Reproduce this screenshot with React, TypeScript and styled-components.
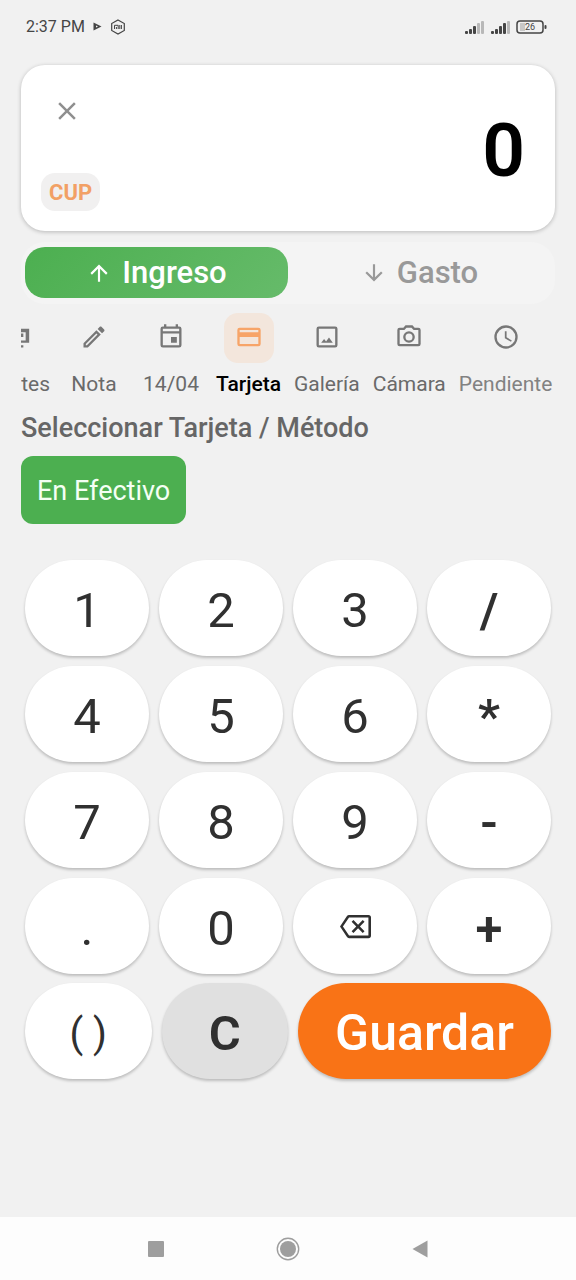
import React, { useState } from 'react';
import styled, { createGlobalStyle } from 'styled-components';

const GlobalStyle = createGlobalStyle`
  * { box-sizing: border-box; }
  body {
    margin: 0;
    background: #f1f1f1;
    font-family: Roboto, "Liberation Sans", sans-serif;
  }
  button {
    border: 0;
    padding: 0;
    background: none;
    font: inherit;
    color: inherit;
    cursor: pointer;
  }
  svg { display: block; flex: none; fill: currentColor; }
`;

const Screen = styled.div`
  display: flex;
  flex-direction: column;
  min-height: 100vh;
  background: #f1f1f1;
`;

const StatusBar = styled.header`
  display: flex;
  align-items: center;
  justify-content: space-between;
  height: 53px;
  padding: 0 29px 0 26px;
  color: #454545;
  font-size: 16px;
`;

const StatusGroup = styled.div<{ $gap: number }>`
  display: flex;
  align-items: center;
  gap: ${(p) => p.$gap}px;
`;

const Main = styled.main`
  display: flex;
  flex-direction: column;
  padding: 12px 21px 0;
`;

const AmountCard = styled.section`
  display: flex;
  align-items: center;
  justify-content: space-between;
  padding: 21px 30px 20px 20px;
  border-radius: 24px;
  background: #fff;
  box-shadow: 0 1px 4px rgba(0, 0, 0, 0.24);
`;

const CardSide = styled.div`
  display: flex;
  flex-direction: column;
  align-items: flex-start;
  gap: 37px;
`;

const CloseButton = styled.button`
  display: grid;
  place-items: center;
  width: 52px;
  height: 50px;
  color: #8f8f8f;
`;

const CurrencyButton = styled.button`
  height: 38px;
  padding: 0 8px;
  border-radius: 14px;
  background: #f1f0f0;
  color: #f2a065;
  font-size: 22px;
  font-weight: 700;
`;

const Amount = styled.output`
  padding-top: 2px;
  color: #000;
  font-size: 75px;
  font-weight: 600;
  line-height: 88px;
`;

const KindSwitch = styled.div`
  display: grid;
  grid-template-columns: 1fr 1fr;
  margin-top: 11px;
  padding: 5px 4px 6px;
  border-radius: 24px;
  background: #f4f4f4;
`;

const KindButton = styled.button<{ $active: boolean }>`
  display: flex;
  align-items: center;
  justify-content: center;
  gap: 10px;
  height: 51px;
  border-radius: 20px;
  background: ${(p) => (p.$active ? 'linear-gradient(135deg, #4caf50, #66bb6a)' : 'transparent')};
  color: ${(p) => (p.$active ? '#fff' : '#999')};
  font-size: 31px;
  font-weight: 500;
`;

const OptionStrip = styled.nav`
  display: flex;
  gap: 11px;
  margin-top: 9px;
  overflow: hidden;
`;

const OptionButton = styled.button<{ $active: boolean; $cut?: boolean; $dim?: boolean }>`
  display: flex;
  flex: none;
  flex-direction: column;
  align-items: ${(p) => (p.$cut ? 'flex-end' : 'center')};
  gap: 8px;
  min-width: ${(p) => (p.$cut ? 0 : 66)}px;
  padding: 0 ${(p) => (p.$cut ? 0 : 1)}px;
  color: ${(p) => (p.$active ? '#000' : p.$dim ? '#828282' : '#6a6a6a')};
  font-size: 21px;
  font-weight: ${(p) => (p.$active ? 500 : 400)};
  line-height: 26px;
`;

const OptionIcon = styled.span<{ $active: boolean; $cut?: boolean }>`
  display: grid;
  place-items: center;
  justify-content: ${(p) => (p.$cut ? 'start' : 'center')};
  width: ${(p) => (p.$cut ? 29 : 50)}px;
  height: 50px;
  padding-bottom: 2px;
  border-radius: 14px;
  background: ${(p) => (p.$active ? '#f3e6dc' : 'transparent')};
  color: ${(p) => (p.$active ? '#f7a468' : '#777')};
`;

const SectionTitle = styled.h2`
  margin: 15px 0 0;
  color: #666;
  font-size: 27px;
  font-weight: 500;
  line-height: 32px;
`;

const MethodList = styled.div`
  display: flex;
  gap: 10px;
  margin-top: 12px;
`;

const MethodButton = styled.button`
  height: 68px;
  padding: 1px 16px 0;
  border-radius: 12px;
  background: #4caf50;
  color: #f4fff4;
  font-size: 27px;
`;

const Keypad = styled.section`
  display: flex;
  flex-direction: column;
  gap: 9px;
  padding: 36px 4px 40px;
`;

const KeyGrid = styled.div<{ $columns: string }>`
  display: grid;
  grid-template-columns: ${(p) => p.$columns};
  gap: 10px;
`;

type Tone = 'plain' | 'muted' | 'primary';
const toneBackground: Record<Tone, string> = {
  plain: '#fff',
  muted: '#e0e0e0',
  primary: '#f97316',
};

const Key = styled.button<{ $tone?: Tone; $weight?: number; $size?: number; $icon?: boolean }>`
  display: flex;
  align-items: center;
  justify-content: center;
  height: 96px;
  padding-top: ${(p) => (p.$icon ? 0 : 4)}px;
  border-radius: 48px;
  background: ${(p) => toneBackground[p.$tone ?? 'plain']};
  box-shadow: 0 2px 3px rgba(0, 0, 0, 0.22);
  color: ${(p) => (p.$tone === 'primary' ? '#fff' : '#303030')};
  font-size: ${(p) => p.$size ?? 49}px;
  font-weight: ${(p) => p.$weight ?? 400};
`;

const SystemBar = styled.footer`
  display: flex;
  justify-content: center;
  margin-top: auto;
  height: 63px;
  background: #fdfdfd;
  color: #9e9e9e;
`;

const SystemButton = styled.button`
  display: grid;
  place-items: center;
  width: 23%;
`;

const paths = {
  close:
    'M19,6.41L17.59,5L12,10.59L6.41,5L5,6.41L10.59,12L5,17.59L6.41,19L12,13.41L17.59,19L19,17.59L13.41,12L19,6.41Z',
  up: 'M13,20H11V8L5.5,13.5L4.08,12.08L12,4.16L19.92,12.08L18.5,13.5L13,8V20Z',
  down: 'M11,4H13V16L18.5,10.5L19.92,11.92L12,19.84L4.08,11.92L5.5,10.5L11,16V4Z',
  board: 'M0,5H7V17H0V15H4V8H0ZM0,9H2V12H0ZM0,19H2V21H0Z',
  pencil:
    'M14.06,9L15,9.94L5.92,19H5V18.08L14.06,9M17.66,3C17.41,3 17.15,3.1 16.96,3.29L15.13,5.12L18.88,8.87L20.71,7.04C21.1,6.65 21.1,6 20.71,5.63L18.37,3.29C18.17,3.09 17.92,3 17.66,3M14.06,6.19L3,17.25V21H6.75L17.81,9.94L14.06,6.19Z',
  calendar:
    'M19,3H18V1H16V3H8V1H6V3H5A2,2 0 0,0 3,5V19A2,2 0 0,0 5,21H19A2,2 0 0,0 21,19V5A2,2 0 0,0 19,3M19,19H5V9H19V19M19,7H5V5H19V7M12,12H17V17H12V12Z',
  card:
    'M20,4H4A2,2 0 0,0 2,6V18A2,2 0 0,0 4,20H20A2,2 0 0,0 22,18V6A2,2 0 0,0 20,4M20,18H4V12H20V18M20,8H4V6H20V8Z',
  image:
    'M19,3H5A2,2 0 0,0 3,5V19A2,2 0 0,0 5,21H19A2,2 0 0,0 21,19V5A2,2 0 0,0 19,3M19,19H5V5H19V19M7,17L9.5,13.8L11.2,15.8L13.7,12.5L17,17Z',
  camera:
    'M20,4H16.83L15,2H9L7.17,4H4A2,2 0 0,0 2,6V18A2,2 0 0,0 4,20H20A2,2 0 0,0 22,18V6A2,2 0 0,0 20,4M20,18H4V6H8.05L9.88,4H14.12L15.95,6H20V18M12,7A5,5 0 0,0 7,12A5,5 0 0,0 12,17A5,5 0 0,0 17,12A5,5 0 0,0 12,7M12,15A3,3 0 0,1 9,12A3,3 0 0,1 12,9A3,3 0 0,1 15,12A3,3 0 0,1 12,15Z',
  clock:
    'M12,20A8,8 0 0,0 20,12A8,8 0 0,0 12,4A8,8 0 0,0 4,12A8,8 0 0,0 12,20M12,2A10,10 0 0,1 22,12A10,10 0 0,1 12,22A10,10 0 0,1 2,12A10,10 0 0,1 12,2M12.5,7V12.25L17,14.92L16.25,16.15L11,13V7H12.5Z',
  backspace:
    'M19,15.59L17.59,17L14,13.41L10.41,17L9,15.59L12.59,12L9,8.41L10.41,7L14,10.59L17.59,7L19,8.41L15.41,12L19,15.59M22,3A2,2 0 0,1 24,5V19A2,2 0 0,1 22,21H7C6.31,21 5.77,20.64 5.41,20.11L0,12L5.41,3.88C5.77,3.35 6.31,3 7,3H22M22,5H7L2.28,12L7,19H22V5Z',
};

function Icon({ name, size }: { name: keyof typeof paths; size: number }) {
  return (
    <svg width={size} height={size} viewBox="0 0 24 24" fillRule="evenodd" aria-hidden="true">
      <path d={paths[name]} />
    </svg>
  );
}

// Cellular strength: five rising bars, the unfilled ones in light grey.
function Signal({ level }: { level: number }) {
  return (
    <svg width="21" height="14" viewBox="0 0 21 14" aria-hidden="true">
      {[3, 5, 8, 11, 13].map((h, i) => (
        <rect key={h} x={i * 4 + 1} y={14 - h} width="3" height={h} rx="1" fill={i < level ? '#454545' : '#b8b8b8'} />
      ))}
    </svg>
  );
}

const options: { id: string; label: string; icon: keyof typeof paths; cut?: boolean; dim?: boolean }[] = [
  { id: 'first', label: 'tes', icon: 'board', cut: true },
  { id: 'note', label: 'Nota', icon: 'pencil' },
  { id: 'date', label: '14/04', icon: 'calendar' },
  { id: 'card', label: 'Tarjeta', icon: 'card' },
  { id: 'gallery', label: 'Galería', icon: 'image' },
  { id: 'camera', label: 'Cámara', icon: 'camera' },
  { id: 'pending', label: 'Pendiente', icon: 'clock', dim: true },
];

const keys: { label: string; weight?: number }[] = [
  { label: '1' }, { label: '2' }, { label: '3' }, { label: '/', weight: 600 },
  { label: '4' }, { label: '5' }, { label: '6' }, { label: '*', weight: 600 },
  { label: '7' }, { label: '8' }, { label: '9' }, { label: '-', weight: 600 },
  { label: '.' }, { label: '0' }, { label: 'back' }, { label: '+', weight: 600 },
];

export default function App() {
  const [kind, setKind] = useState('in');
  const [option, setOption] = useState('card');
  const [amount, setAmount] = useState('0');
  const press = (k: string) => setAmount((a) => (a === '0' && k !== '.' ? k : a + k));
  const erase = () => setAmount((a) => a.slice(0, -1) || '0');

  return (
    <>
      <GlobalStyle />
      <Screen>
        <StatusBar>
          <StatusGroup $gap={8}>
            <span>2:37 PM</span>
            <svg width="9" height="9" viewBox="0 0 9 9" aria-hidden="true">
              <path d="M0.5,0.5L8.5,4.5L0.5,8.5ZM3,3.5V5.5L5,4.5Z" fillRule="evenodd" />
            </svg>
            <svg width="16" height="16" viewBox="0 0 16 16" aria-hidden="true">
              <path d="M8,1L14.3,4.5V11.5L8,15L1.7,11.5V4.5Z" fill="none" stroke="currentColor" strokeWidth="1.2" />
              <path d="M4.5,10V6.3H8.2V10M6.4,8V10M9.8,6V10M11.4,6V10" fill="none" stroke="currentColor" strokeWidth="1" />
            </svg>
          </StatusGroup>
          <StatusGroup $gap={5}>
            <Signal level={3} />
            <Signal level={4} />
            <svg width="31" height="14" viewBox="0 0 31 14" role="img" aria-label="26">
              <rect x="1" y="1" width="26" height="12" rx="3" fill="none" stroke="currentColor" strokeWidth="1.5" />
              <rect x="4" y="3" width="5" height="8" fill="#c8c8c8" />
              <rect x="28.5" y="5" width="2" height="4" rx="1" />
              <text x="14" y="10" fontSize="9" textAnchor="middle">26</text>
            </svg>
          </StatusGroup>
        </StatusBar>

        <Main>
          <AmountCard>
            <CardSide>
              <CloseButton aria-label="Cerrar">
                <Icon name="close" size={30} />
              </CloseButton>
              <CurrencyButton>CUP</CurrencyButton>
            </CardSide>
            <Amount>{amount}</Amount>
          </AmountCard>

          <KindSwitch>
            <KindButton $active={kind === 'in'} aria-pressed={kind === 'in'} onClick={() => setKind('in')}>
              <Icon name="up" size={26} />
              Ingreso
            </KindButton>
            <KindButton $active={kind === 'out'} aria-pressed={kind === 'out'} onClick={() => setKind('out')}>
              <Icon name="down" size={26} />
              Gasto
            </KindButton>
          </KindSwitch>

          <OptionStrip>
            {options.map((o) => (
              <OptionButton
                key={o.id}
                $active={option === o.id}
                $cut={o.cut}
                $dim={o.dim}
                onClick={() => setOption(o.id)}
              >
                <OptionIcon $active={option === o.id} $cut={o.cut}>
                  <Icon name={o.icon} size={28} />
                </OptionIcon>
                {o.label}
              </OptionButton>
            ))}
          </OptionStrip>

          <SectionTitle>Seleccionar Tarjeta / Método</SectionTitle>
          <MethodList>
            <MethodButton>En Efectivo</MethodButton>
          </MethodList>

          <Keypad>
            <KeyGrid $columns="repeat(4, 1fr)">
              {keys.map((k) =>
                k.label === 'back' ? (
                  <Key key={k.label} $icon aria-label="Borrar" onClick={erase}>
                    <Icon name="backspace" size={31} />
                  </Key>
                ) : (
                  <Key key={k.label} $weight={k.weight} onClick={() => press(k.label)}>
                    {k.label}
                  </Key>
                ),
              )}
            </KeyGrid>
            <KeyGrid $columns="1fr 1fr 2fr">
              <Key $size={40}>( )</Key>
              <Key $tone="muted" $weight={600} onClick={() => setAmount('0')}>C</Key>
              <Key $tone="primary" $weight={500} $size={50}>Guardar</Key>
            </KeyGrid>
          </Keypad>
        </Main>

        <SystemBar>
          <SystemButton aria-label="Recientes">
            <svg width="16" height="16" viewBox="0 0 16 16"><rect width="16" height="16" rx="1" /></svg>
          </SystemButton>
          <SystemButton aria-label="Inicio">
            <svg width="24" height="24" viewBox="0 0 24 24">
              <circle cx="12" cy="12" r="10.7" fill="none" stroke="currentColor" strokeWidth="1.4" />
              <circle cx="12" cy="12" r="8" />
            </svg>
          </SystemButton>
          <SystemButton aria-label="Atrás">
            <svg width="16" height="18" viewBox="0 0 16 18"><path d="M15.5,0.5V17.5L0.5,9Z" /></svg>
          </SystemButton>
        </SystemBar>
      </Screen>
    </>
  );
}
